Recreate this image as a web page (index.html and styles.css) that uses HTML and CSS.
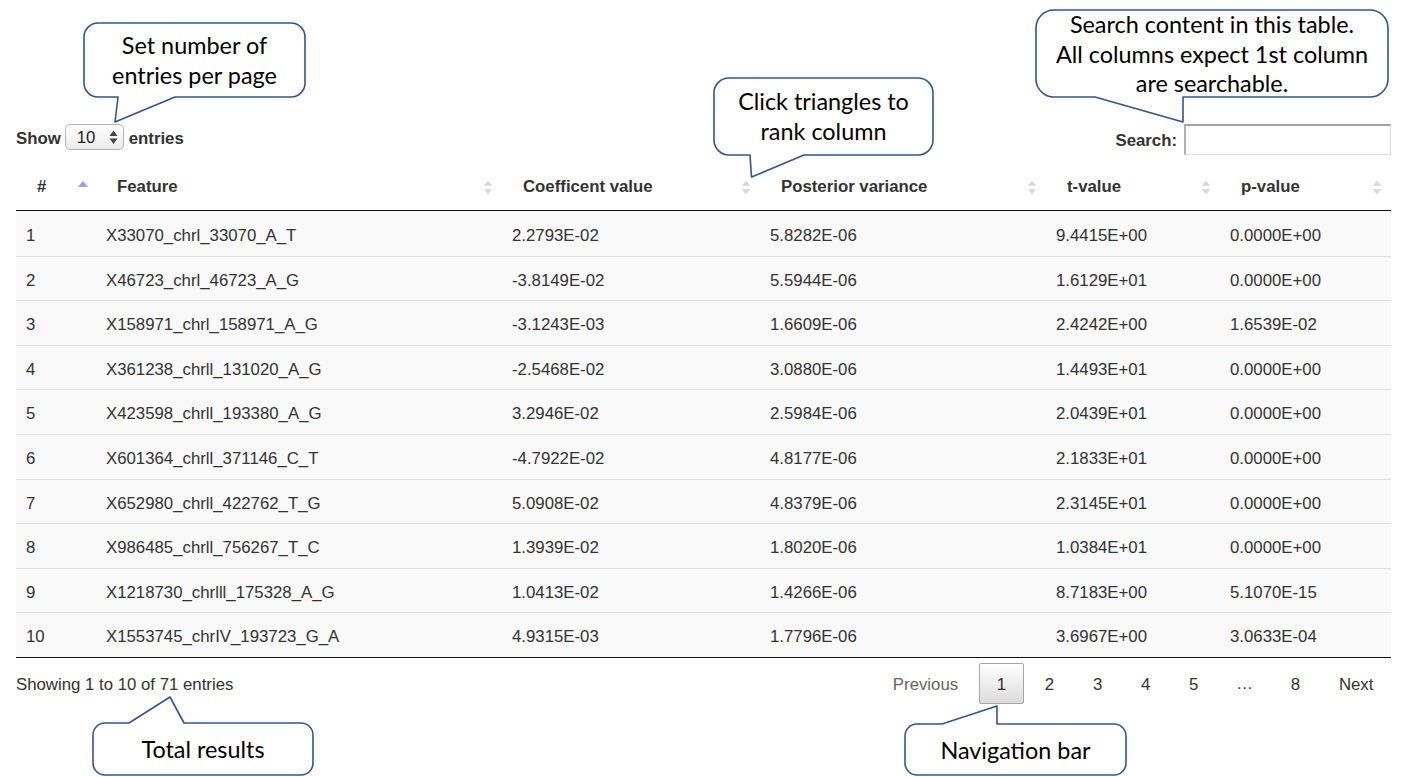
FILE: index.html
```html
<!DOCTYPE html>
<html lang="en">
<head>
<meta charset="utf-8">
<title>Feature table</title>
<link rel="stylesheet" href="styles.css">
</head>
<body>
<div class="page">

  <div class="callout c1">
    <svg class="callout-shape" width="221" height="74" viewBox="0 0 221 74"><path d="M14,0 H207 A14,14 0 0 1 221,14 V60 A14,14 0 0 1 207,74 H91 L31,99 L34,74 H14 A14,14 0 0 1 0,60 V14 A14,14 0 0 1 14,0 Z"/></svg>
    <div class="callout-text">Set number of<br>entries per page</div>
  </div>

  <div class="callout c2">
    <svg class="callout-shape" width="219" height="77" viewBox="0 0 219 77"><path d="M15,0 H204 A15,15 0 0 1 219,15 V62 A15,15 0 0 1 204,77 H90 L37.5,99 L36,77 H15 A15,15 0 0 1 0,62 V15 A15,15 0 0 1 15,0 Z"/></svg>
    <div class="callout-text">Click triangles to<br>rank column</div>
  </div>

  <div class="callout c3">
    <svg class="callout-shape" width="352" height="87" viewBox="0 0 352 87"><path d="M18,0 H334 A18,18 0 0 1 352,18 V69 A18,18 0 0 1 334,87 H147 V112 L59,87 H18 A18,18 0 0 1 0,69 V18 A18,18 0 0 1 18,0 Z"/></svg>
    <div class="callout-text">Search content in this table.<br>All columns expect 1st column<br>are searchable.</div>
  </div>

  <div class="callout c4">
    <svg class="callout-shape" width="220" height="52" viewBox="0 0 220 52"><path d="M12,0 H36 L77,-26 L91,0 H208 A12,12 0 0 1 220,12 V40 A12,12 0 0 1 208,52 H12 A12,12 0 0 1 0,40 V12 A12,12 0 0 1 12,0 Z"/></svg>
    <div class="callout-text">Total results</div>
  </div>

  <div class="callout c5">
    <svg class="callout-shape" width="221" height="51" viewBox="0 0 221 51"><path d="M12,0 H37 L92,-18 V0 H209 A12,12 0 0 1 221,12 V39 A12,12 0 0 1 209,51 H12 A12,12 0 0 1 0,39 V12 A12,12 0 0 1 12,0 Z"/></svg>
    <div class="callout-text">Navigation bar</div>
  </div>

  <div class="dt-wrapper">
    <div class="dt-top">
      <div class="dt-length">
        <span class="lbl">Show</span>
        <span class="fake-select">10
          <svg class="sel-arrows" width="9" height="15" viewBox="0 0 9 15"><path d="M4.5,0.5 L8.5,6 H0.5 Z M0.5,8.5 H8.5 L4.5,14 Z"/></svg>
        </span>
        <span class="lbl">entries</span>
      </div>
      <div class="dt-filter">
        <span class="lbl">Search:</span>
        <span class="search-input"></span>
      </div>
    </div>

    <table class="dt">
      <colgroup>
        <col class="w-num"><col class="w-feat"><col class="w-coef"><col class="w-post"><col class="w-t"><col class="w-p">
      </colgroup>
      <thead>
        <tr>
          <th>#<svg class="sort asc" width="10" height="15" viewBox="0 0 10 15"><path d="M5,1 L10,7 H0 Z"/></svg></th>
          <th>Feature<svg class="sort both" width="10" height="15" viewBox="0 0 10 15"><path d="M5,0.5 L9.5,6 H0.5 Z M0.5,9 H9.5 L5,14.5 Z"/></svg></th>
          <th>Coefficent value<svg class="sort both" width="10" height="15" viewBox="0 0 10 15"><path d="M5,0.5 L9.5,6 H0.5 Z M0.5,9 H9.5 L5,14.5 Z"/></svg></th>
          <th>Posterior variance<svg class="sort both" width="10" height="15" viewBox="0 0 10 15"><path d="M5,0.5 L9.5,6 H0.5 Z M0.5,9 H9.5 L5,14.5 Z"/></svg></th>
          <th>t-value<svg class="sort both" width="10" height="15" viewBox="0 0 10 15"><path d="M5,0.5 L9.5,6 H0.5 Z M0.5,9 H9.5 L5,14.5 Z"/></svg></th>
          <th>p-value<svg class="sort both" width="10" height="15" viewBox="0 0 10 15"><path d="M5,0.5 L9.5,6 H0.5 Z M0.5,9 H9.5 L5,14.5 Z"/></svg></th>
        </tr>
      </thead>
      <tbody>
        <tr><td>1</td><td>X33070_chrl_33070_A_T</td><td>2.2793E-02</td><td>5.8282E-06</td><td>9.4415E+00</td><td>0.0000E+00</td></tr>
        <tr><td>2</td><td>X46723_chrl_46723_A_G</td><td>-3.8149E-02</td><td>5.5944E-06</td><td>1.6129E+01</td><td>0.0000E+00</td></tr>
        <tr><td>3</td><td>X158971_chrl_158971_A_G</td><td>-3.1243E-03</td><td>1.6609E-06</td><td>2.4242E+00</td><td>1.6539E-02</td></tr>
        <tr><td>4</td><td>X361238_chrll_131020_A_G</td><td>-2.5468E-02</td><td>3.0880E-06</td><td>1.4493E+01</td><td>0.0000E+00</td></tr>
        <tr><td>5</td><td>X423598_chrll_193380_A_G</td><td>3.2946E-02</td><td>2.5984E-06</td><td>2.0439E+01</td><td>0.0000E+00</td></tr>
        <tr><td>6</td><td>X601364_chrll_371146_C_T</td><td>-4.7922E-02</td><td>4.8177E-06</td><td>2.1833E+01</td><td>0.0000E+00</td></tr>
        <tr><td>7</td><td>X652980_chrll_422762_T_G</td><td>5.0908E-02</td><td>4.8379E-06</td><td>2.3145E+01</td><td>0.0000E+00</td></tr>
        <tr><td>8</td><td>X986485_chrll_756267_T_C</td><td>1.3939E-02</td><td>1.8020E-06</td><td>1.0384E+01</td><td>0.0000E+00</td></tr>
        <tr><td>9</td><td>X1218730_chrlll_175328_A_G</td><td>1.0413E-02</td><td>1.4266E-06</td><td>8.7183E+00</td><td>5.1070E-15</td></tr>
        <tr><td>10</td><td>X1553745_chrIV_193723_G_A</td><td>4.9315E-03</td><td>1.7796E-06</td><td>3.6967E+00</td><td>3.0633E-04</td></tr>
      </tbody>
    </table>

    <div class="dt-bottom">
      <div class="dt-info">Showing 1 to 10 of 71 entries</div>
      <div class="dt-paginate">
        <span class="pg disabled">Previous</span>
        <span class="pg current">1</span>
        <span class="pg">2</span>
        <span class="pg">3</span>
        <span class="pg">4</span>
        <span class="pg">5</span>
        <span class="pg ellipsis">…</span>
        <span class="pg">8</span>
        <span class="pg">Next</span>
      </div>
    </div>
  </div>
</div>
</body>
</html>
```

FILE: styles.css
```css
* { box-sizing: border-box; }

html, body {
  margin: 0;
  padding: 0;
  background: #fff;
}

body {
  font-family: "Liberation Sans", Arial, Helvetica, sans-serif;
  font-size: 16.8px;
  color: #333;
}

.page {
  position: relative;
  width: 1408px;
  height: 777px;
  overflow: hidden;
  padding: 124px 17px 0 16px;
}

/* ---------- callouts (annotation overlays) ---------- */
.callout {
  position: absolute;
  z-index: 5;
}
.callout-shape {
  position: absolute;
  left: 0;
  top: 0;
  overflow: visible;
}
.callout-shape path {
  fill: #fff;
  stroke: #2F5597;
  stroke-width: 1.6;
  stroke-linejoin: round;
}
.callout-text {
  position: absolute;
  left: 0;
  top: 0;
  right: 0;
  bottom: 0;
  display: flex;
  align-items: center;
  justify-content: center;
  text-align: center;
  font-family: Lato, "Open Sans", sans-serif;
  font-size: 23.4px;
  line-height: 30px;
  color: #000;
}

.c1 { left: 84px; top: 23px; width: 221px; height: 74px; }
.c2 { left: 714px; top: 78px; width: 219px; height: 77px; }
.c2 .callout-text { line-height: 29.6px; }
.c3 { left: 1036px; top: 10px; width: 352px; height: 87px; }
.c3 .callout-text { line-height: 29.5px; padding-top: 2px; }
.c4 { left: 93px; top: 723px; width: 220px; height: 52px; }
.c5 { left: 905px; top: 724px; width: 221px; height: 51px; }

/* ---------- datatable ---------- */
.dt-wrapper {
  width: 1375px;
}

.dt-top {
  display: flex;
  justify-content: space-between;
  align-items: flex-start;
  height: 31px;
}

.lbl {
  font-weight: bold;
}

.dt-length {
  display: flex;
  align-items: center;
  height: 26px;
  gap: 4px;
}
.dt-length .lbl { padding-top: 3px; }
.dt-length .lbl:last-child { margin-left: 1px; }

.fake-select {
  position: relative;
  display: flex;
  align-items: center;
  width: 59px;
  height: 26px;
  padding-left: 11px;
  padding-top: 2px;
  border: 1px solid #b4b4b4;
  border-radius: 5px;
  background: linear-gradient(#ffffff, #ececec);
  font-size: 16.8px;
  color: #222;
}
.sel-arrows {
  position: absolute;
  right: 5px;
  top: 5px;
}
.sel-arrows path { fill: #444; }

.dt-filter {
  display: flex;
  align-items: center;
  height: 31px;
  gap: 7px;
}
.dt-filter .lbl { padding-top: 2px; }
.search-input {
  display: block;
  width: 207px;
  height: 31px;
  border-style: solid;
  border-width: 2px 1px 1px 2px;
  border-color: #a3a3a3 #dcdcdc #dcdcdc #b0b0b0;
  background: #fff;
}

table.dt {
  width: 1375px;
  table-layout: fixed;
  border-collapse: separate;
  border-spacing: 0;
  margin-top: 7px;
  border-bottom: 1px solid #111;
}
.w-num { width: 80px; }
.w-feat { width: 406px; }
.w-coef { width: 258px; }
.w-post { width: 286px; }
.w-t { width: 174px; }
.w-p { width: 171px; }

table.dt th {
  position: relative;
  text-align: left;
  font-weight: bold;
  line-height: 20px;
  padding: 15px 21px 13px;
  border-bottom: 1px solid #111;
  white-space: nowrap;
}
.sort {
  position: absolute;
  right: 9px;
  top: 18px;
}
.sort.both path { fill: #dadada; }
.sort.asc { right: 8px; top: 18px; }
.sort.asc path { fill: #9c9ce8; }

table.dt td {
  padding: 14px 10px 10.6px;
  line-height: 19px;
  border-top: 1px solid #dedede;
  background: #f9f9f9;
  white-space: nowrap;
}
table.dt tbody tr:first-child td {
  border-top-color: #f9f9f9;
}

.dt-bottom {
  display: flex;
  justify-content: space-between;
  align-items: center;
  margin-top: 5.5px;
  height: 41px;
}
.dt-info {
  padding-top: 3px;
}

.dt-paginate {
  display: flex;
  align-items: center;
  gap: 3.5px;
}
.pg {
  display: block;
  height: 41px;
  line-height: 42px;
  padding: 0 16.6px;
  border: 1px solid transparent;
  border-radius: 2px;
  color: #333;
}
.pg.disabled { color: #666; }
.pg.current {
  border-color: #a6a6a6;
  background: linear-gradient(#ffffff, #dcdcdc);
}
.pg.ellipsis { padding: 0 16.8px; border: none; }
```
